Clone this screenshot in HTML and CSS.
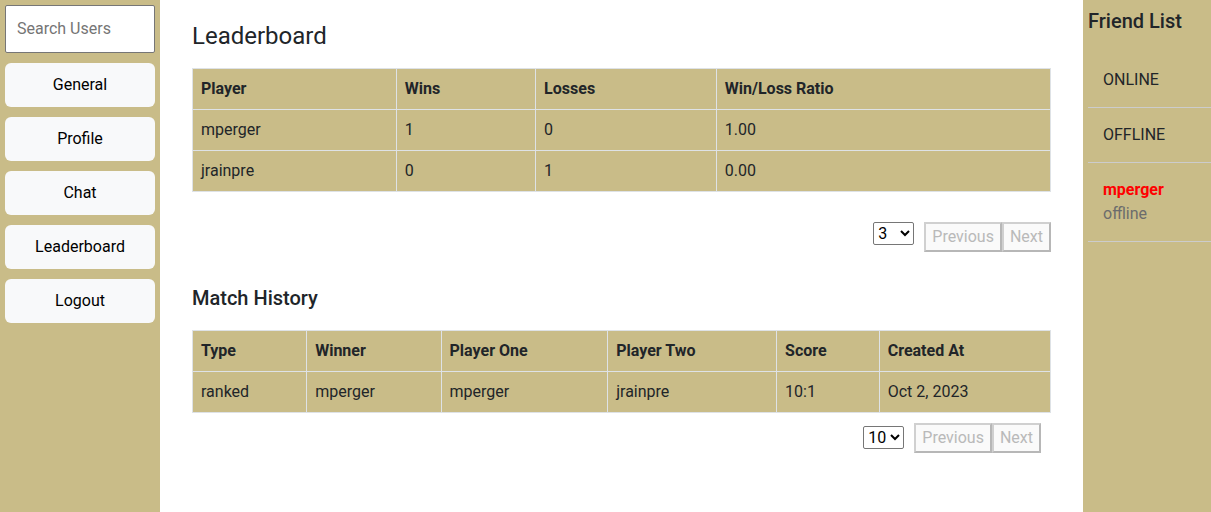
FILE: index.html
```html
<!DOCTYPE html>
<html lang="en">
<head>
<meta charset="utf-8">
<meta name="viewport" content="width=device-width, initial-scale=1">
<title>Leaderboard</title>
<link rel="stylesheet" href="styles.css">
</head>
<body>
<div class="app">
  <nav class="sidebar" aria-label="Main">
    <input class="search" type="text" placeholder="Search Users" aria-label="Search Users">
    <button class="nav-button" type="button">General</button>
    <button class="nav-button" type="button">Profile</button>
    <button class="nav-button" type="button">Chat</button>
    <button class="nav-button" type="button">Leaderboard</button>
    <button class="nav-button" type="button">Logout</button>
  </nav>
  <main class="content">
    <section>
      <h1 class="page-title">Leaderboard</h1>
      <table class="grid">
        <thead>
          <tr><th>Player</th><th>Wins</th><th>Losses</th><th>Win/Loss Ratio</th></tr>
        </thead>
        <tbody>
          <tr><td>mperger</td><td>1</td><td>0</td><td>1.00</td></tr>
          <tr><td>jrainpre</td><td>0</td><td>1</td><td>0.00</td></tr>
        </tbody>
      </table>
      <div class="pager pager-players">
        <select class="page-size" aria-label="Players per page"><option>3</option><option>5</option><option>10</option></select>
        <div class="page-buttons"><button class="page-button" type="button" disabled>Previous</button><button class="page-button" type="button" disabled>Next</button></div>
      </div>
    </section>
    <section>
      <h2 class="section-title">Match History</h2>
      <table class="grid">
        <thead>
          <tr><th>Type</th><th>Winner</th><th>Player One</th><th>Player Two</th><th>Score</th><th>Created At</th></tr>
        </thead>
        <tbody>
          <tr><td>ranked</td><td>mperger</td><td>mperger</td><td>jrainpre</td><td>10:1</td><td>Oct 2, 2023</td></tr>
        </tbody>
      </table>
      <div class="pager pager-matches">
        <select class="page-size" aria-label="Matches per page"><option>10</option><option>20</option></select>
        <div class="page-buttons"><button class="page-button" type="button" disabled>Previous</button><button class="page-button" type="button" disabled>Next</button></div>
      </div>
    </section>
  </main>
  <aside class="friends">
    <h2 class="friends-title">Friend List</h2>
    <ul class="friend-list">
      <li class="friend-item">ONLINE</li>
      <li class="friend-item">OFFLINE</li>
      <li class="friend-item"><span class="friend-name">mperger</span><span class="friend-status">offline</span></li>
    </ul>
  </aside>
</div>
</body>
</html>
```
FILE: styles.css
```css
* { box-sizing: border-box; }

body {
  margin: 0;
  background: #fff;
  color: #212529;
  font: 16px/24px Roboto, sans-serif;
}

button, input, select { font: inherit; }

.app { display: flex; min-height: 100vh; }

.sidebar {
  display: flex;
  flex: 0 0 160px;
  flex-direction: column;
  gap: 10px;
  padding: 5px;
  background: #c9bc88;
}

.search {
  width: 100%;
  height: 48px;
  padding: 10px 11px 12px;
  border: 1px solid #767676;
  border-radius: 2px;
  background: #fff;
}

.search::placeholder { color: #757575; }

.nav-button {
  height: 44px;
  padding: 10px;
  border: 0;
  border-radius: 6px;
  background: #f8f9fa;
  color: #000;
}

.content { flex: 1; min-width: 0; padding: 20px 32px; }

.page-title { margin: 0 0 16px; font-size: 24px; font-weight: 400; line-height: 32px; }

.section-title { margin: 0 0 16px; font-size: 20px; font-weight: 500; line-height: 32px; }

.grid {
  width: 100%;
  border-collapse: collapse;
  background: #c9bc88;
}

.grid th, .grid td { padding: 8px; border: 1px solid #dee2e6; text-align: left; }

.grid th { font-weight: 700; }

.pager { display: flex; justify-content: flex-end; gap: 10px; }

.pager-players { margin: 30px 0; }

.pager-matches { margin: 10px 10px 0 0; }

.pager-matches .page-size { margin-top: 3px; }

.page-size {
  width: 41px;
  height: 23px;
  padding: 0;
  border: 1px solid #767676;
  border-radius: 2px;
  background: #fff;
  color: #000;
  line-height: 20px;
}

.page-buttons { display: flex; }

.page-button {
  height: 30px;
  padding: 1px 6px;
  border: 2px solid;
  border-color: #d0d0d0 #b7b7b7 #b7b7b7 #d0d0d0;
  background: #fafafa;
  color: #b9b9b9;
}

.friends {
  flex: 0 0 128px;
  padding: 5px 0 5px 5px;
  background: #c9bc88;
}

.friends-title { margin: 0 0 16px; font-size: 20px; font-weight: 500; line-height: 32px; }

.friend-list { margin: 0; padding: 0; list-style: none; }

.friend-item { padding: 15px; border-bottom: 1px solid #ccc; }

.friend-name { display: block; color: #f00; font-weight: 700; }

.friend-status { display: block; color: #6c6c6c; }
```
